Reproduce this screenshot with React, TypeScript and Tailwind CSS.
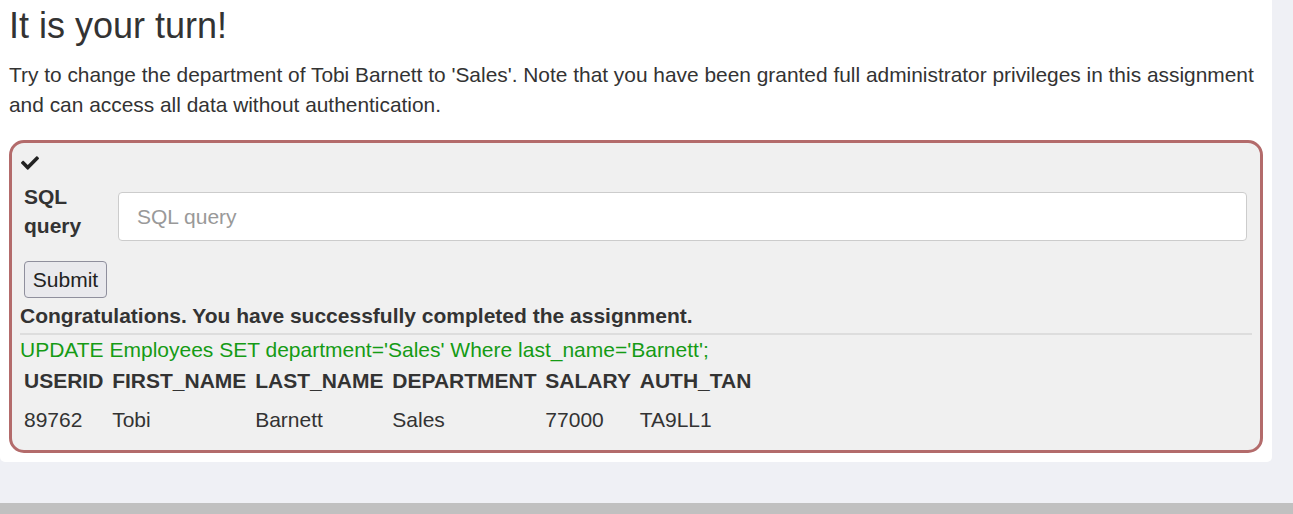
import { FaCheck } from "react-icons/fa";

export default function App() {
  const cols = ["USERID", "FIRST_NAME", "LAST_NAME", "DEPARTMENT", "SALARY", "AUTH_TAN"];
  const row = ["89762", "Tobi", "Barnett", "Sales", "77000", "TA9LL1"];

  return (
    <div className="h-[514px] w-[1293px] overflow-hidden bg-[#eff0f5] font-['Liberation_Sans',Arial,sans-serif] text-[#333]">
      <div className="h-[462px] w-[1272px] rounded-b-[5px] bg-white px-[9px]">
        <h3 className="pt-[6px] text-[36px] leading-[40px] text-[#333]">It is your turn!</h3>
        <p className="mt-[14px] text-[20.9px] leading-[30px]">
          Try to change the department of Tobi Barnett to 'Sales'. Note that you have been granted full administrator
          privileges in this assignment and can access all data without authentication.
        </p>

        <div className="mt-[20px] h-[313px] rounded-[15px] border-[3px] border-[#b36b6b] bg-[#f0f0f0] pl-[8px] pr-[8px]">
          <div className="pl-[1px] pt-[11px] text-[#222]">
            <FaCheck size={18} />
          </div>
          <div className="mt-[10px] flex items-start pl-[4px]">
            <label className="w-[94px] text-[21px] font-bold leading-[29px] text-[#333]">
              SQL
              <br />
              query
            </label>
            <input
              type="text"
              placeholder="SQL query"
              className="mt-[10px] h-[49px] w-[1129px] rounded-[4px] border border-[#ccc] bg-white px-[18px] text-[21px] placeholder:text-[#999]"
            />
          </div>
          <button
            type="button"
            className="ml-[4px] mt-[20px] h-[37px] w-[83px] rounded-[4px] border border-[#8f8f9d] bg-[#e9e9ed] text-[21px] text-[#222]"
          >
            Submit
          </button>
          <div className="mt-[5px] text-[21px] font-bold leading-[26px] text-[#333]">
            Congratulations. You have successfully completed the assignment.
          </div>
          <hr className="mt-[4px] border-t-[2px] border-[#ddd]" />
          <div className="mt-[2px] text-[21px] leading-[26px] text-[#159b15]">
            UPDATE Employees SET department='Sales' Where last_name='Barnett';
          </div>
          <table className="text-[21px] text-[#333]">
            <thead>
              <tr>
                {cols.map((c) => (
                  <th key={c} className="py-[6px] pl-[4px] pr-[4.8px] text-left font-bold leading-[24px]">
                    {c}
                  </th>
                ))}
              </tr>
            </thead>
            <tbody>
              <tr>
                {row.map((v, i) => (
                  <td key={i} className="py-[9px] pl-[4px] pr-[4.8px] leading-[24px]">
                    {v}
                  </td>
                ))}
              </tr>
            </tbody>
          </table>
        </div>
      </div>
      <div className="mt-[41px] h-[11px] bg-[#c0c0c0]" />
    </div>
  );
}
